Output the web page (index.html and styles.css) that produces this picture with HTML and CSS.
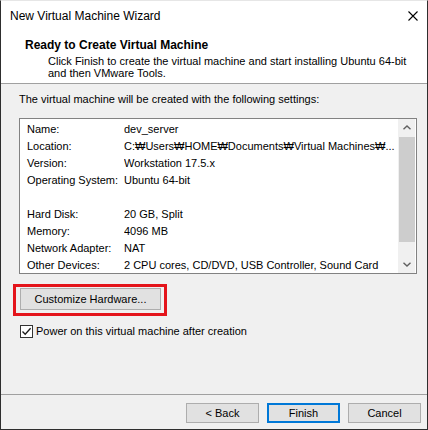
FILE: index.html
```html
<!DOCTYPE html>
<html>
<head>
<meta charset="utf-8">
<link rel="stylesheet" href="styles.css">
</head>
<body>
<div class="window">
  <div class="titlebar">
    <span class="title">New Virtual Machine Wizard</span>
    <svg class="close" width="10" height="10" viewBox="0 0 10 10"><path d="M0.5 0.5 L9.5 9.5 M9.5 0.5 L0.5 9.5" stroke="#000" stroke-width="1.1" fill="none"/></svg>
  </div>
  <div class="header">
    <div class="h-title">Ready to Create Virtual Machine</div>
    <div class="h-desc">Click Finish to create the virtual machine and start installing Ubuntu 64-bit<br>and then VMware Tools.</div>
  </div>
  <div class="content">
    <div class="intro">The virtual machine will be created with the following settings:</div>
    <div class="listbox">
      <div class="rows">
        <div class="row"><span class="k">Name:</span><span class="v">dev_server</span></div>
        <div class="row"><span class="k">Location:</span><span class="v">C:₩Users₩HOME₩Documents₩Virtual Machines₩...</span></div>
        <div class="row"><span class="k">Version:</span><span class="v">Workstation 17.5.x</span></div>
        <div class="row"><span class="k">Operating System:</span><span class="v">Ubuntu 64-bit</span></div>
        <div class="row"><span class="k"></span><span class="v"></span></div>
        <div class="row"><span class="k">Hard Disk:</span><span class="v">20 GB, Split</span></div>
        <div class="row"><span class="k">Memory:</span><span class="v">4096 MB</span></div>
        <div class="row"><span class="k">Network Adapter:</span><span class="v">NAT</span></div>
        <div class="row"><span class="k">Other Devices:</span><span class="v">2 CPU cores, CD/DVD, USB Controller, Sound Card</span></div>
      </div>
      <div class="scrollbar">
        <div class="arrow"><svg width="8" height="5" viewBox="0 0 8 5"><path d="M0.5 4.3 L4 1 L7.5 4.3" stroke="#606060" stroke-width="1.4" fill="none"/></svg></div>
        <div class="track"><div class="thumb"></div></div>
        <div class="arrow"><svg width="8" height="5" viewBox="0 0 8 5"><path d="M0.5 0.7 L4 4 L7.5 0.7" stroke="#606060" stroke-width="1.4" fill="none"/></svg></div>
      </div>
    </div>
    <div class="custom-row">
      <button class="btn custom">Customize Hardware...</button>
      <div class="highlight"></div>
    </div>
    <label class="check">
      <span class="box"><svg width="11" height="11" viewBox="0 0 11 11"><path d="M1.5 5.5 L4.2 8.3 L9.6 2.2" stroke="#1a1a1a" stroke-width="1.3" fill="none"/></svg></span>
      <span>Power on this virtual machine after creation</span>
    </label>
  </div>
  <div class="footer">
    <button class="btn">&lt; Back</button>
    <button class="btn primary">Finish</button>
    <button class="btn">Cancel</button>
  </div>
</div>
</body>
</html>
```
FILE: styles.css
```css
* { box-sizing: border-box; }
html, body { margin: 0; padding: 0; }
body {
  font-family: "Liberation Sans", Arial, sans-serif;
  font-size: 11px;
  color: #000;
  background: #f0f0f0;
}
.window {
  width: 428px;
  height: 430px;
  border-left: 1px solid #2e2e2e;
  border-right: 1px solid #2e2e2e;
  border-bottom: 1px solid #2e2e2e;
  border-top: 1px solid #e6e6e6;
  background: #f0f0f0;
  display: flex;
  flex-direction: column;
}
.titlebar {
  height: 30px;
  background: #fff;
  display: flex;
  align-items: center;
  justify-content: space-between;
  padding: 0 9px 0 9px;
  line-height: 14px;
}
.title { font-size: 12px; }
.close { display: block; margin-top: -1px; }
.header {
  height: 53px;
  background: #fff;
  border-bottom: 1px solid #a0a0a0;
  padding: 7px 0 0 24px;
}
.h-title { font-weight: bold; font-size: 12px; line-height: 14px; }
.h-desc { margin-top: 3px; padding-left: 23px; line-height: 12px; }
.content {
  flex: 1;
  padding: 8px 10px 0 18px;
  position: relative;
}
.intro { line-height: 14px; }
.listbox {
  margin-top: 12px;
  width: 398px;
  height: 156px;
  border: 1px solid #828282;
  background: #fff;
  display: flex;
  overflow: hidden;
}
.rows {
  flex: 1;
  min-width: 0;
  padding: 2px 0 0 7px;
  overflow: hidden;
}
.row {
  display: flex;
  height: 17px;
  line-height: 17px;
  white-space: nowrap;
}
.k { width: 97px; flex: none; }
.v { flex: 1; min-width: 0; overflow: hidden; }
.scrollbar {
  width: 17px;
  flex: none;
  background: #f0f0f0;
  display: flex;
  flex-direction: column;
  margin-right: 1px;
  padding-left: 1px;
}
.arrow {
  height: 17px;
  display: flex;
  align-items: center;
  justify-content: center;
}
.arrow svg { display: block; }
.track { flex: 1; }
.thumb {
  margin-top: 1px;
  height: 105px;
  background: #cdcdcd;
}
.custom-row {
  position: relative;
  margin-top: 14px;
  padding-left: 1px;
  height: 22px;
}
.btn {
  font-family: inherit;
  font-size: 11px;
  color: #000;
  background: #e1e1e1;
  border: 1px solid #adadad;
  border-radius: 0;
  padding: 0;
  margin: 0;
  display: flex;
  align-items: center;
  justify-content: center;
}
.custom { width: 141px; height: 22px; }
.highlight {
  position: absolute;
  left: -6px;
  top: -4px;
  width: 154px;
  height: 32px;
  border: 3px solid #e4141b;
}
.check {
  display: flex;
  align-items: center;
  margin-top: 14px;
  margin-left: 1px;
  line-height: 14px;
}
.box {
  width: 13px;
  height: 13px;
  border: 1px solid #333;
  background: #fff;
  display: flex;
  align-items: center;
  justify-content: center;
  margin-right: 3px;
}
.box svg { display: block; }
.footer {
  height: 35px;
  border-top: 1px solid #a0a0a0;
  display: flex;
  justify-content: flex-end;
  align-items: flex-start;
  gap: 8px;
  padding: 8px 6px 0 0;
}
.footer .btn { width: 73px; height: 20px; }
.footer .primary { border: 2px solid #0078d7; }
```
